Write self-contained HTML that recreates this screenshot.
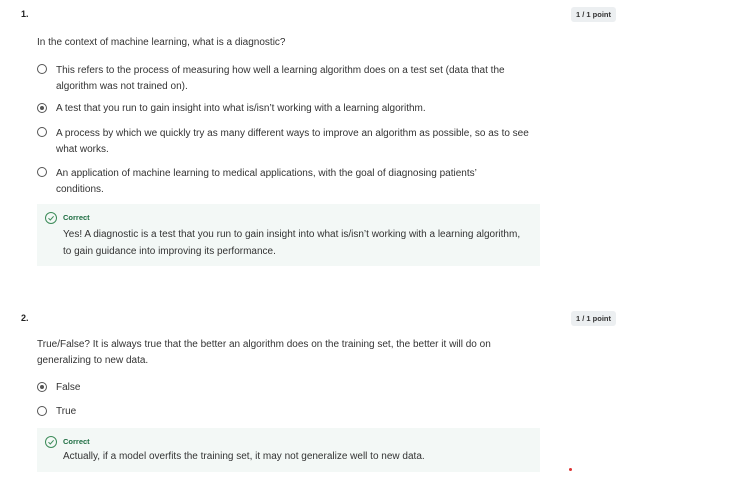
<!DOCTYPE html>
<html><head><style>
body{margin:0;width:749px;height:482px;background:#fff;font-family:"Liberation Sans",sans-serif;color:#333;font-size:10px;position:relative;overflow:hidden}
.a{position:absolute;white-space:nowrap;line-height:12px}
.num{font-weight:bold;font-size:9px;color:#222}
.badge{position:absolute;background:#eceff1;border-radius:3px;font-weight:bold;font-size:7.5px;color:#333;padding:3px 3px;width:39px;text-align:center}
.r{position:absolute;width:10px;height:10px;border:1.3px solid #555;border-radius:50%;box-sizing:border-box}
.r.on::after{content:"";position:absolute;left:1.5px;top:1.5px;width:4.4px;height:4.4px;border-radius:50%;background:#555}
.fb{position:absolute;left:37px;width:503px;background:#f3f8f6}
.ok{position:absolute;width:12px;height:12px;border:1px solid #3d8c5a;border-radius:50%;box-sizing:border-box}
.g{color:#1f6e43;font-weight:bold;font-size:7.5px}
</style></head><body>
<div class="a num" style="left:21px;top:8px">1.</div>
<div class="badge" style="left:571px;top:7px">1 / 1 point</div>
<div class="a" style="left:37px;top:37px">In the context of machine learning, what is a diagnostic?</div>
<div class="r" style="left:37px;top:64px"></div>
<div class="a" style="left:56px;top:63px;line-height:16px">This refers to the process of measuring how well a learning algorithm does on a test set (data that the<br>algorithm was not trained on).</div>
<div class="r on" style="left:37px;top:103px"></div>
<div class="a" style="left:56px;top:103px">A test that you run to gain insight into what is/isn’t working with a learning algorithm.</div>
<div class="r" style="left:37px;top:127px"></div>
<div class="a" style="left:56px;top:126px;line-height:16px">A process by which we quickly try as many different ways to improve an algorithm as possible, so as to see<br>what works.</div>
<div class="r" style="left:37px;top:167px"></div>
<div class="a" style="left:56px;top:166px;line-height:16px">An application of machine learning to medical applications, with the goal of diagnosing patients’<br>conditions.</div>
<div class="fb" style="top:204px;height:62px"></div>
<div class="ok" style="left:45px;top:212px"><svg width="10" height="10" style="position:absolute;left:0;top:0"><path d="M2.5 5.2 L4.3 7 L7.6 3.3" stroke="#3d8c5a" fill="none" stroke-width="1"/></svg></div>
<div class="a g" style="left:63px;top:212px">Correct</div>
<div class="a" style="left:63px;top:226px;line-height:17px">Yes! A diagnostic is a test that you run to gain insight into what is/isn’t working with a learning algorithm,<br>to gain guidance into improving its performance.</div>

<div class="a num" style="left:21px;top:312px">2.</div>
<div class="badge" style="left:571px;top:311px">1 / 1 point</div>
<div class="a" style="left:37px;top:337px;line-height:16px">True/False? It is always true that the better an algorithm does on the training set, the better it will do on<br>generalizing to new data.</div>
<div class="r on" style="left:37px;top:382px"></div>
<div class="a" style="left:56px;top:382px">False</div>
<div class="r" style="left:37px;top:406px"></div>
<div class="a" style="left:56px;top:406px">True</div>
<div class="fb" style="top:428px;height:44px"></div>
<div class="ok" style="left:45px;top:436px"><svg width="10" height="10" style="position:absolute;left:0;top:0"><path d="M2.5 5.2 L4.3 7 L7.6 3.3" stroke="#3d8c5a" fill="none" stroke-width="1"/></svg></div>
<div class="a g" style="left:63px;top:436px">Correct</div>
<div class="a" style="left:63px;top:451px">Actually, if a model overfits the training set, it may not generalize well to new data.</div>
<div style="position:absolute;left:569px;top:468px;width:3px;height:3px;border-radius:50%;background:#d33"></div>
</body></html>
